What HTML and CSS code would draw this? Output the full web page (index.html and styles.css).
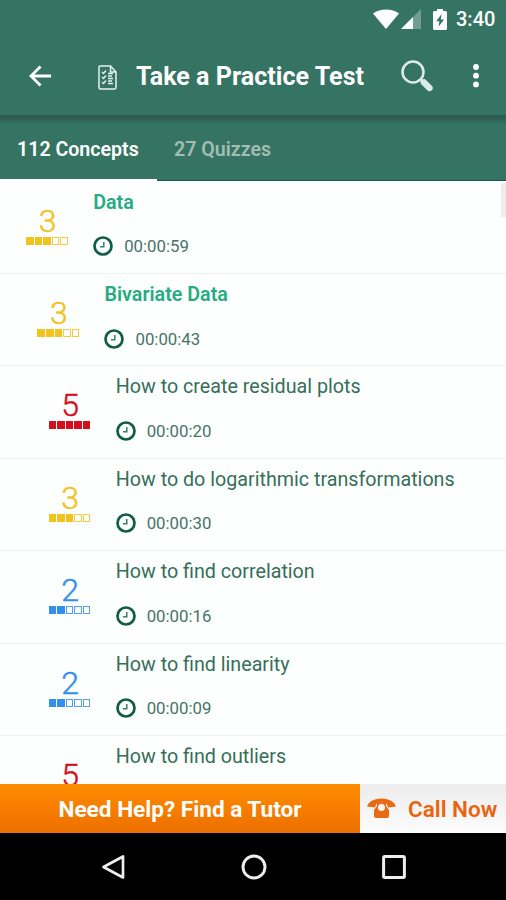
FILE: index.html
```html
<!DOCTYPE html>
<html lang="en">
<head>
<meta charset="utf-8">
<title>Take a Practice Test</title>
<link rel="stylesheet" href="styles.css">
</head>
<body>
<svg width="0" height="0" class="defs">
  <symbol id="clock" viewBox="0 0 20 20"><circle cx="10" cy="10" r="8.5" fill="none" stroke="currentColor" stroke-width="2.7"/><path d="M10.8 6V10.8H7" fill="none" stroke="currentColor" stroke-width="1.5" opacity=".8"/></symbol>
</svg>
<div class="screen">
  <header class="top">
    <div class="status">
      <svg class="wifi" viewBox="0 0 26 20"><path d="M0 4.5C7-1 19-1 26 4.5L13 20Z" fill="#fff"/></svg>
      <svg class="signal" viewBox="0 0 20 20"><path d="M20 0V20H0Z" fill="#fff" opacity=".3"/><path d="M12 8V20H0Z" fill="#fff"/></svg>
      <svg class="battery" viewBox="0 0 14 21"><path d="M4 0H10V2H12.5Q14 2 14 3.5V19.5Q14 21 12.5 21H1.5Q0 21 0 19.5V3.5Q0 2 1.5 2H4Z" fill="#fff"/><path d="M8.6 5L3.2 12.3H6.4L5.5 17.8L11 10.4H7.8Z" fill="#357462"/></svg>
      <span class="time">3:40</span>
    </div>
    <div class="bar">
      <svg class="back" viewBox="0 0 24 22"><path d="M23 11H2M12 1L2 11L12 21" fill="none" stroke="#fff" stroke-width="2.9"/></svg>
      <svg class="doc" viewBox="0 0 19 25"><path d="M2 1H12.5L18 7V22.5Q18 24 16.5 24H2.5Q1 24 1 22.5V2Q1 1 2 1ZM12.5 1V7H18" fill="none" stroke="#e6f2ed" stroke-width="1.5"/><path d="M4 7L5.5 8.5L8 5.5M4 12L5.5 13.5L8 10.5M4 17L5.5 18.5L8 15.5M10 8.5H15M10 13.5H15M10 18.5H15M10 11H14M10 16H14" fill="none" stroke="#e6f2ed" stroke-width="1.4"/></svg>
      <h1>Take a Practice Test</h1>
      <svg class="search" viewBox="0 0 32 32"><circle cx="12" cy="12" r="10.5" fill="none" stroke="#dcece6" stroke-width="2.5"/><path d="M19.5 19.5L22 22" stroke="#dcece6" stroke-width="3"/><path d="M23 22.5L28.5 28" stroke="#dcece6" stroke-width="6.4" stroke-linecap="round"/></svg>
      <svg class="more" viewBox="0 0 6 24"><circle cx="3" cy="3" r="2.9" fill="#fff"/><circle cx="3" cy="11.7" r="2.9" fill="#fff"/><circle cx="3" cy="20.4" r="2.9" fill="#fff"/></svg>
    </div>
  </header>
  <nav class="tabs"><div class="tab active"><span>112 Concepts</span></div><div class="tab"><span>27 Quizzes</span></div></nav>
  <main class="list">
    <article class="row depth0">
      <div class="rating yellow"><b>3</b><div class="boxes"><i class="on"></i><i class="on"></i><i class="on"></i><i></i><i></i></div></div>
      <div class="info"><h2>Data</h2><div class="dur"><svg><use href="#clock"/></svg><span>00:00:59</span></div></div>
    </article>
    <article class="row depth1">
      <div class="rating yellow"><b>3</b><div class="boxes"><i class="on"></i><i class="on"></i><i class="on"></i><i></i><i></i></div></div>
      <div class="info"><h2>Bivariate Data</h2><div class="dur"><svg><use href="#clock"/></svg><span>00:00:43</span></div></div>
    </article>
    <article class="row depth2">
      <div class="rating red"><b>5</b><div class="boxes"><i class="on"></i><i class="on"></i><i class="on"></i><i class="on"></i><i class="on"></i></div></div>
      <div class="info"><h3>How to create residual plots</h3><div class="dur"><svg><use href="#clock"/></svg><span>00:00:20</span></div></div>
    </article>
    <article class="row depth2">
      <div class="rating yellow"><b>3</b><div class="boxes"><i class="on"></i><i class="on"></i><i class="on"></i><i></i><i></i></div></div>
      <div class="info"><h3>How to do logarithmic transformations</h3><div class="dur"><svg><use href="#clock"/></svg><span>00:00:30</span></div></div>
    </article>
    <article class="row depth2">
      <div class="rating blue"><b>2</b><div class="boxes"><i class="on"></i><i class="on"></i><i></i><i></i><i></i></div></div>
      <div class="info"><h3>How to find correlation</h3><div class="dur"><svg><use href="#clock"/></svg><span>00:00:16</span></div></div>
    </article>
    <article class="row depth2">
      <div class="rating blue"><b>2</b><div class="boxes"><i class="on"></i><i class="on"></i><i></i><i></i><i></i></div></div>
      <div class="info"><h3>How to find linearity</h3><div class="dur"><svg><use href="#clock"/></svg><span>00:00:09</span></div></div>
    </article>
    <article class="row depth2">
      <div class="rating red"><b>5</b></div>
      <div class="info"><h3>How to find outliers</h3></div>
    </article>
    <div class="scroll"></div>
  </main>
  <footer class="help">
    <div class="tutor">Need Help? Find a Tutor</div>
    <div class="call"><svg viewBox="0 0 29 20"><path d="M0 8.500C3-2.200 26-2.200 29 8.500L21 9.500L19.500 5.500Q14.500 4 9.500 5.500L8 9.500Z" fill="#e96a10"/><path d="M10 5V8L7 12V18Q7 20 9 20H20Q22 20 22 18V12L19 8V5Z" fill="#e96a10"/><circle cx="14.500" cy="9.500" r="3.500" fill="#f5f5f5"/></svg><span>Call Now</span></div>
  </footer>
  <div class="nav">
    <svg class="nb" viewBox="0 0 24 26"><path d="M22 2.5V23.5L2.5 13Z" fill="none" stroke="#eee" stroke-width="2.7" stroke-linejoin="round"/></svg>
    <svg class="nh" viewBox="0 0 26 26"><circle cx="13" cy="13" r="11" fill="none" stroke="#eee" stroke-width="2.9"/></svg>
    <svg class="nr" viewBox="0 0 24 24"><rect x="1.6" y="1.6" width="20.8" height="20.8" rx="1.2" fill="none" stroke="#eee" stroke-width="3"/></svg>
  </div>
</div>
</body>
</html>
```
FILE: styles.css
```css
* { box-sizing: border-box; }
body { margin: 0; font-family: Roboto, sans-serif; background: #fdfefe; }
h1, h2, h3 { margin: 0; white-space: nowrap; }
svg { display: block; flex: none; }
.defs { position: absolute; }
.screen { width: 506px; height: 900px; display: flex; flex-direction: column; overflow: hidden; }
.top { height: 115px; background: #357462; color: #fff; flex: none; }
.status { height: 38px; display: flex; align-items: center; justify-content: flex-end; padding-right: 11px; }
.wifi { width: 26px; height: 20px; margin-right: 2px; }
.signal { width: 20px; height: 20px; margin-right: 12px; }
.battery { width: 14px; height: 21px; margin-right: 9px; }
.time { font-size: 20px; line-height: 24px; font-weight: 500; width: 39px; white-space: nowrap; }
.bar { height: 76px; display: flex; align-items: center; padding-left: 29px; }
.back { width: 23px; height: 22px; margin: -1px 46px 0 0; }
.doc { width: 19px; height: 25px; margin: 3px 19px 0 0; }
h1 { font-size: 25px; line-height: 32px; font-weight: 700; width: 265px; letter-spacing: .05px; padding-top: 1px; }
.search { width: 32px; height: 32px; margin: -1px 39px 0 0; }
.more { width: 6px; height: 24px; margin-left: 1px; }
.tabs { height: 66px; flex: none; display: flex; background: linear-gradient(#2d5c4f 0, #2d5e50 3px, #357462 10px); box-shadow: inset 0 -1px #155b44; }
.tab { color: #a3bdb2; font-size: 19.6px; line-height: 24px; font-weight: 600; padding: 23px 17px 0; white-space: nowrap; }
.tab.active { width: 157px; color: #fff; border-bottom: 2px solid #fff; }
.list { flex: 1; min-height: 0; overflow: hidden; position: relative; padding-top: .6px; }
.row { height: 92.4px; display: flex; border-bottom: 1px solid #eff1f1; }
.depth0 { padding-left: 26px; }
.depth1 { padding-left: 37.3px; }
.depth2 { padding-left: 48.5px; }
.rating { width: 42px; margin-right: 25.2px; padding-top: 23px; display: flex; flex-direction: column; align-items: center; }
.rating b { font-weight: 300; font-size: 32px; line-height: 33px; padding-left: 1px; -webkit-text-stroke: .5px currentColor; }
.yellow { color: #f2c21f; }
.red { color: #d40e1c; }
.blue { color: #3290ec; }
.boxes { display: flex; gap: 1px; margin-top: -1px; }
.boxes i { width: 7.6px; height: 8px; border: 1px solid currentColor; opacity: .85; }
.boxes .on { background: currentColor; opacity: 1; }
.info { padding-top: 8px; }
h2, h3 { font-size: 19.7px; line-height: 25px; height: 45.6px; }
h2 { color: #25ac80; font-weight: 600; }
h3 { color: #356f58; font-weight: 400; }
.dur { display: flex; align-items: center; height: 22px; color: #0f5d45; }
.dur svg { width: 20px; height: 20px; margin-right: 11px; }
.dur span { font-size: 16.8px; line-height: 20px; color: #477466; }
.scroll { position: absolute; right: 0; top: 2px; width: 5px; height: 34px; background: #ededee; }
.help { height: 49px; flex: none; display: flex; }
.tutor { width: 360px; background: linear-gradient(#ff8c00, #ec6f00); color: #fff; font-size: 22.6px; line-height: 51px; font-weight: 700; text-align: center; white-space: nowrap; }
.call { flex: 1; display: flex; align-items: center; padding-left: 7px; background: linear-gradient(#ececec, #fcfcfc); color: #e9640c; font-size: 22.5px; font-weight: 600; white-space: nowrap; }
.call svg { width: 29px; height: 20px; margin: -2px 12px 0 0; }
.call span { padding-top: 1px; }
.nav { height: 67px; flex: none; background: #000; display: flex; align-items: center; padding-left: 101px; }
.nb { width: 24px; height: 26px; margin-right: 116px; }
.nh { width: 26px; height: 26px; margin-right: 115px; }
.nr { width: 24px; height: 24px; }
```
